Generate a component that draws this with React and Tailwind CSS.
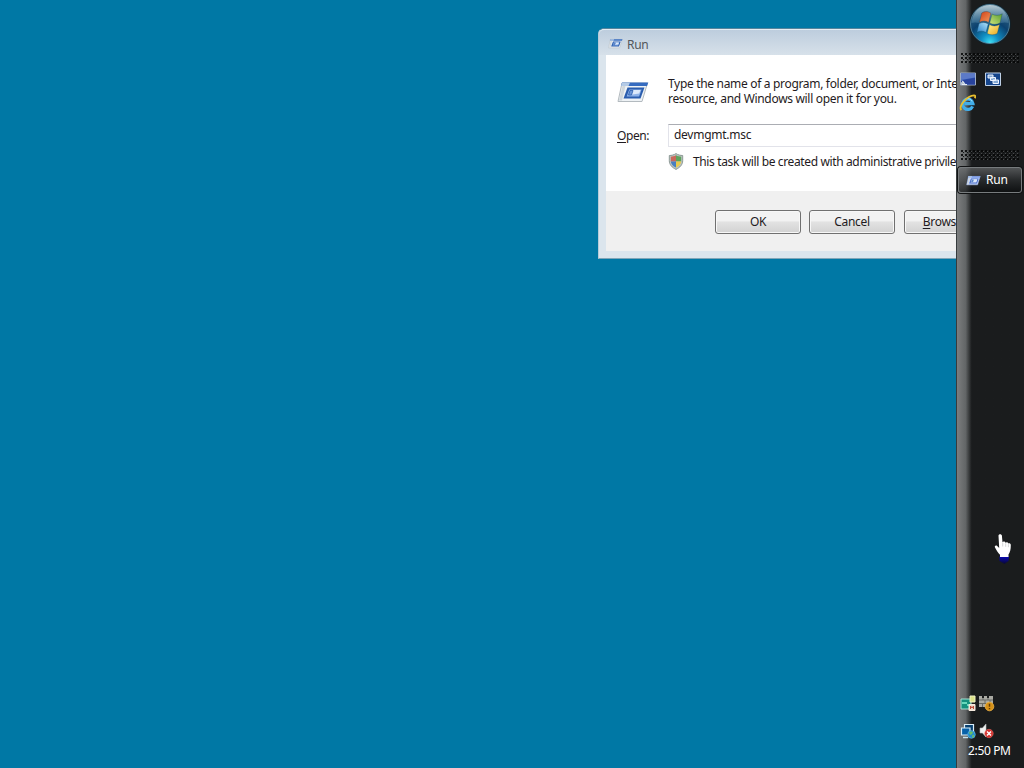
import React from "react";

function RunIcon({ className, bright }) {
  return (
    <svg viewBox="0 0 32 24" className={className}>
      <path
        d="M5 3h25.500l-5.500 18.500H1z"
        fill={bright ? "#c3d6ff" : "#eef2f5"}
        stroke={bright ? "#a4bdf2" : "#b3babf"}
      />
      <path d="M5.500 6L2 20.500h3L8.500 6z" fill="#d0d7dc" />
      <path d="M5 2.500h26.300L30 6H4z" fill={bright ? "#7898e6" : "#356bc0"} />
      <path d="M5 2.500h8L11.500 6H4z" fill="#b5cbe6" />
      <path d="M10.500 7.500h17l-4 11h-17z" fill={bright ? "#4568c5" : "#2a5dae"} />
      <path d="M12.300 9.500h12.300l-2.500 7H9.600z" fill={bright ? "#dbe7ff" : "#8eb2e8"} />
      <path d="M13.500 10h10l-1.300 3.500-10 1.500z" fill="#dce9fa" />
      <path d="M13 10.500h3l-1.500 4.500h-3z" fill="#6e97d7" stroke="#2a5dae" strokeWidth=".8" />
    </svg>
  );
}

function ShieldIcon() {
  return (
    <svg width="16" height="17" viewBox="0 0 16 17" className="shrink-0">
      <path
        d="M8 .6C5.800 2 3.600 2.500 1.300 2.500v5.200c0 4 2.800 6.800 6.700 8.700 3.900-1.900 6.700-4.700 6.700-8.700V2.500C12.400 2.500 10.200 2 8 .6z"
        fill="#bcc5c1"
        stroke="#8d9996"
      />
      <path d="M8 2.300C6.200 3.300 4.500 3.700 2.800 3.800v4.600H8z" fill="#c9675a" />
      <path d="M8 2.300c1.800 1 3.500 1.400 5.200 1.500v4.600H8z" fill="#5da35c" />
      <path d="M2.800 8.400H8v6.200C5 13 3 11 2.800 8.400z" fill="#497fc0" />
      <path d="M13.200 8.400H8v6.200c3-1.600 5-3.600 5.200-6.200z" fill="#eacb4c" />
    </svg>
  );
}

function StartOrb() {
  return (
    <svg width="42" height="42" viewBox="0 0 42 42">
      <defs>
        <radialGradient id="orb" cx="50%" cy="98%" r="90%">
          <stop offset="0" stopColor="#3fe0f5" />
          <stop offset=".25" stopColor="#118fc4" />
          <stop offset=".6" stopColor="#0b4270" />
          <stop offset="1" stopColor="#36637f" />
        </radialGradient>
        <linearGradient id="gloss" x1="0" y1="0" x2="0" y2="1">
          <stop offset="0" stopColor="#cfdde4" stopOpacity=".85" />
          <stop offset="1" stopColor="#5e98b8" stopOpacity=".25" />
        </linearGradient>
        <linearGradient id="redPane" x1="0" y1="0" x2="1" y2="1">
          <stop offset="0" stopColor="#cf3f17" />
          <stop offset="1" stopColor="#f49a5c" />
        </linearGradient>
        <linearGradient id="greenPane" x1="1" y1="0" x2="0" y2="1">
          <stop offset="0" stopColor="#559c31" />
          <stop offset="1" stopColor="#cfe57b" />
        </linearGradient>
        <linearGradient id="bluePane" x1="0" y1="1" x2="1" y2="0">
          <stop offset="0" stopColor="#267fc8" />
          <stop offset="1" stopColor="#b4e5fa" />
        </linearGradient>
        <linearGradient id="yellowPane" x1="1" y1="1" x2="0" y2="0">
          <stop offset="0" stopColor="#eaa51d" />
          <stop offset="1" stopColor="#fff18f" />
        </linearGradient>
      </defs>
      <circle cx="21" cy="21" r="20.800" fill="#11232d" />
      <circle cx="21" cy="21" r="19.500" fill="url(#orb)" stroke="#5c8ba5" strokeWidth=".8" />
      <path d="M2.500 20C3.500 8 11 2 21 2s17.500 6 18.500 18c-6-2-12 2-18.500 2S8.500 18 2.500 20z" fill="url(#gloss)" />
      <g stroke="#123f5a" strokeOpacity=".55" strokeWidth=".6">
        <path d="M12.700 10c3-2 6.300-1.900 9.200.2l-2.300 9.300c-2.900-1.900-5.800-1.800-9.200-.2z" fill="url(#redPane)" />
        <path d="M23 11c3.300 1.900 6.500 1.800 10.300-.2L31 20c-3.600 1.800-7 1.800-10.300 0z" fill="url(#greenPane)" />
        <path d="M10 20.600c3.400-1.600 6.300-1.500 9.200.4L17 29.600c-2.900-1.900-5.800-1.900-9.200-.2z" fill="url(#bluePane)" />
        <path d="M20.400 21.600c3.300 1.800 6.700 1.700 10.200-.1l-2.300 9c-3.400 1.800-6.800 1.800-10.100 0z" fill="url(#yellowPane)" />
      </g>
    </svg>
  );
}

function ShowDesktopIcon() {
  return (
    <svg width="16" height="15" viewBox="0 0 16 15">
      <path d="M.5 1h15v12H.5z" fill="#2a4fae" stroke="#9faec6" />
      <path d="M1 1.500h14v4L1 8z" fill="#5c7ac8" />
      <path d="M1 9l14-3v6.500H1z" fill="#28439d" />
      <path d="M1 10.500l2-1.500 3 3.500H1z" fill="#b9c6d6" />
      <path d="M2 8.500l2.500 3M1.500 12.500H7" stroke="#e5edf5" />
    </svg>
  );
}

function SwitchWindowsIcon() {
  return (
    <svg width="16" height="15" viewBox="0 0 16 15">
      <path d="M.5 1h15v12.500H.5z" fill="#15458c" stroke="#bed0e6" />
      <path d="M3 3h5v3H3zM5.500 5.500h5v3h-5zM8 8h5.500v3.500H8z" fill="#84a9d5" stroke="#eff5ff" />
    </svg>
  );
}

function InternetExplorerIcon() {
  return (
    <svg width="17" height="18" viewBox="0 0 17 18">
      <path d="M13.600 12.300A5.200 5.200 0 1 1 14 9.600H5.500" fill="none" stroke="#42aeea" strokeWidth="3.200" />
      <path d="M4.500 7.500C5.500 5.600 7 4.700 9 4.700s3.300 1 4 2.700" fill="none" stroke="#a6e6fb" />
      <path d="M2.300 16.200C-.8 12.500 8 1.500 15 1.300c1.700 0 1.500 1.700.8 3" fill="none" stroke="#e6bd2d" strokeWidth="1.800" />
    </svg>
  );
}

function SafelyRemoveIcon() {
  return (
    <svg width="17" height="17" viewBox="0 0 17 17">
      <path d="M1 4h10v10H1z" fill="#14917e" stroke="#a7ded1" />
      <path d="M2 7h5v2H2zM7 9h4v2H7z" fill="#65d9bb" />
      <path d="M10 1h5v6h-5z" fill="#dbe389" stroke="#f1f2c3" />
      <path d="M9 9.500h6v6H9z" fill="#f0dccb" stroke="#f5ebdf" />
      <path d="M10.500 14v-3l1.500 2 1.500-2v3" fill="none" stroke="#ba4a38" />
    </svg>
  );
}

function FirewallIcon() {
  return (
    <svg width="17" height="17" viewBox="0 0 17 17">
      <path d="M0 1h3v2h2V1h3v2h2V1h4v11H0z" fill="#aaaaa3" />
      <path d="M0 5h14M0 8.500h14M4 3v2m5-2v2M6 5v3.500m5-3.500v3.500M3.500 8.500V12" stroke="#686b66" />
      <circle cx="10.500" cy="11.500" r="4.300" fill="#d49018" stroke="#efb445" strokeWidth=".8" />
      <path d="M10.500 8.800v3m0 1.200v1.200" stroke="#633d07" strokeWidth="1.400" />
    </svg>
  );
}

function NetworkIcon() {
  return (
    <svg width="17" height="17" viewBox="0 0 17 17">
      <path d="M4.500 1.500h9v8h-9z" fill="#07406f" stroke="#d9edf8" strokeWidth="1.200" />
      <path d="M1.500 5h8.500v7H1.500z" fill="#0761a9" stroke="#d9edf8" strokeWidth="1.200" />
      <path d="M3 14.500h5" stroke="#c9e3ec" strokeWidth="1.500" />
      <circle cx="11.500" cy="11.500" r="3.800" fill="#218bcf" stroke="#62b6df" strokeWidth=".7" />
      <path d="M9 9.500l2-1.300 2 1-1 2-2 .8zM12 12.500l2-1v2.500l-1.500 1z" fill="#69bd63" />
    </svg>
  );
}

function MutedIcon() {
  return (
    <svg width="17" height="17" viewBox="0 0 17 17">
      <path d="M1 5h2.500L7 1v13l-3.500-4H1z" fill="#f1f2f2" stroke="#b5babb" strokeWidth=".6" />
      <circle cx="10" cy="10.500" r="4.200" fill="#d4302d" stroke="#e46a62" strokeWidth=".6" />
      <path d="M8 8.500l4 4m0-4l-4 4" stroke="#fff" strokeWidth="1.500" />
    </svg>
  );
}

// Dotted handle between the taskbar sections
function Grip({ id }) {
  return (
    <svg width="58" height="10" className="ml-[4px] shrink-0">
      <defs>
        <pattern id={id} width="4" height="4" patternUnits="userSpaceOnUse">
          <path d="M0 0h2v2H0zM2 2h1v1H2z" fill="#050606" fillOpacity=".85" />
          <path d="M2 1h1v1H2zM0 3h1v1H0z" fill="#8b8f90" fillOpacity=".4" />
        </pattern>
      </defs>
      <rect width="58" height="10" fill={`url(#${id})`} />
    </svg>
  );
}

function DialogButton({ children, className = "" }) {
  return (
    <button
      type="button"
      className={`h-[24px] w-[86px] shrink-0 rounded-[3px] border border-[#707070] bg-linear-to-b from-[#f2f2f2] from-45% via-[#e2e2e2] via-50% to-[#d2d2d2] text-center leading-[20px] tracking-[-0.3px] shadow-[inset_0_0_0_1px_#f7f7f7] ${className}`}
    >
      {children}
    </button>
  );
}

function RunDialog() {
  return (
    <div className="absolute left-[598px] top-[28px] flex h-[231px] w-[414px] flex-col rounded-t-[6px] border border-[#b7cbd8] border-b-[#7fa5b8] border-t-[#55859d] bg-[#dbe5ed] px-[7px] pb-[7px] text-[12px] text-[#1f1b22]">
      <div className="-mx-[7px] flex h-[26px] shrink-0 items-center rounded-t-[5px] border-t border-[#e3ecf3] bg-linear-to-b from-[#bdcddd] to-[#d7e1ea] pl-[9px] pt-[5px] text-[#53575b]">
        <RunIcon className="mb-[3px] h-[11px] w-[15px]" />
        <span className="ml-[4px] leading-[16px] tracking-[-0.3px]">Run</span>
      </div>
      <div className="h-[136px] shrink-0 bg-white pl-[11px] pt-[21px]">
        <div className="flex">
          <RunIcon className="mt-[4px] h-[24px] w-[32px] shrink-0" />
          <p className="ml-[19px] whitespace-nowrap leading-[15px] tracking-[-0.32px]">
            Type the name of a program, folder, document, or Internet
            <br />
            resource, and Windows will open it for you.
          </p>
        </div>
        <div className="mt-[18px] flex h-[23px] items-center">
          <span className="w-[51px] shrink-0 tracking-[-0.4px]">
            <span className="underline underline-offset-2">O</span>pen:
          </span>
          <div className="h-[23px] w-[330px] border border-[#e2e3ea] border-t-[#abadb3] pl-[5px] leading-[20px] tracking-[-0.27px]">
            devmgmt.msc
          </div>
        </div>
        <div className="mt-[6px] flex items-start whitespace-nowrap tracking-[-0.37px]">
          <span className="ml-[51px] flex">
            <ShieldIcon />
          </span>
          <span className="ml-[9px] leading-[18px]">
            This task will be created with administrative privileges.
          </span>
        </div>
      </div>
      <div className="flex grow items-start bg-[#f0f0f0] pl-[109px] pt-[19px]">
        <DialogButton>OK</DialogButton>
        <DialogButton className="ml-[8px]">Cancel</DialogButton>
        <DialogButton className="ml-[9px]">
          <span className="underline underline-offset-2">B</span>rowse...
        </DialogButton>
      </div>
    </div>
  );
}

function Taskbar() {
  return (
    <div className="relative flex h-full w-[68px] flex-col border-l border-[#363b3d] bg-linear-to-r from-[#7c7e7f] from-0% via-[#626566] via-[13%] to-[#1a1c1d] to-[22%] text-[12px] text-white">
      <div className="ml-[12px] mt-[3px] h-[44px]">
        <StartOrb />
      </div>
      <div className="mt-[6px] flex">
        <Grip id="dotsTop" />
      </div>
      <div className="mt-[9px] flex gap-[9px] pl-[3px]">
        <ShowDesktopIcon />
        <SwitchWindowsIcon />
      </div>
      <div className="mt-[7px] pl-[2px]">
        <InternetExplorerIcon />
      </div>
      <div className="mt-[38px] flex">
        <Grip id="dotsTasks" />
      </div>
      <div className="ml-px mt-[7px] flex h-[26px] w-[64px] shrink-0 items-center rounded-[3px] border border-[#777b7d] bg-linear-to-b from-[#696c6e]/70 via-[#35383a]/50 to-[#080a0b]/60 pl-[7px] shadow-[0_0_0_1px_#111314]">
        <RunIcon bright className="h-[11px] w-[15px]" />
        <span className="ml-[5px] leading-[18px] tracking-[-0.2px]">Run</span>
      </div>
      <div className="mt-auto flex gap-[2px] pl-[3px]">
        <SafelyRemoveIcon />
        <FirewallIcon />
      </div>
      <div className="mt-[11px] flex gap-[2px] pl-[3px]">
        <NetworkIcon />
        <MutedIcon />
      </div>
      <div className="mb-[9px] mt-[3px] whitespace-nowrap pl-[11px] leading-[16px] tracking-[-0.35px]">
        2:50 PM
      </div>
    </div>
  );
}

function HandCursor() {
  return (
    <svg width="22" height="34" viewBox="0 0 22 34" className="absolute left-[992px] top-[533px]">
      <defs>
        <linearGradient id="cuff" x1="0" y1="0" x2="0" y2="1">
          <stop offset="0" stopColor="#0a08b8" />
          <stop offset="1" stopColor="#090930" />
        </linearGradient>
      </defs>
      <path d="M7.500 23.500h9.500l-.5 4.500-4 3-5-3z" fill="url(#cuff)" />
      <path
        d="M6.500 2.800c0-2 3.200-2 3.400 0l.6 6.400c.6-1.200 2.700-.9 3 .6.700-1 2.500-.7 2.800.8 1-.7 2.500 0 2.500 1.500 0 4.500-.6 7-2.300 9.500v2.400H8v-2.300c-2-2-3.500-4.300-5-7.200-.8-1.500.9-2.600 2.200-1.400l2 2z"
        fill="#fff"
      />
      <path d="M10.700 9.500v4M13.700 10.300v3.500M16.400 11.200v3" stroke="#b7b9ba" strokeWidth=".6" />
    </svg>
  );
}

export default function App() {
  return (
    <div className="relative flex h-[768px] w-[1024px] justify-end overflow-hidden bg-[#0078a5] font-['Noto_Sans','Open_Sans',sans-serif]">
      <RunDialog />
      <Taskbar />
      <HandCursor />
    </div>
  );
}
